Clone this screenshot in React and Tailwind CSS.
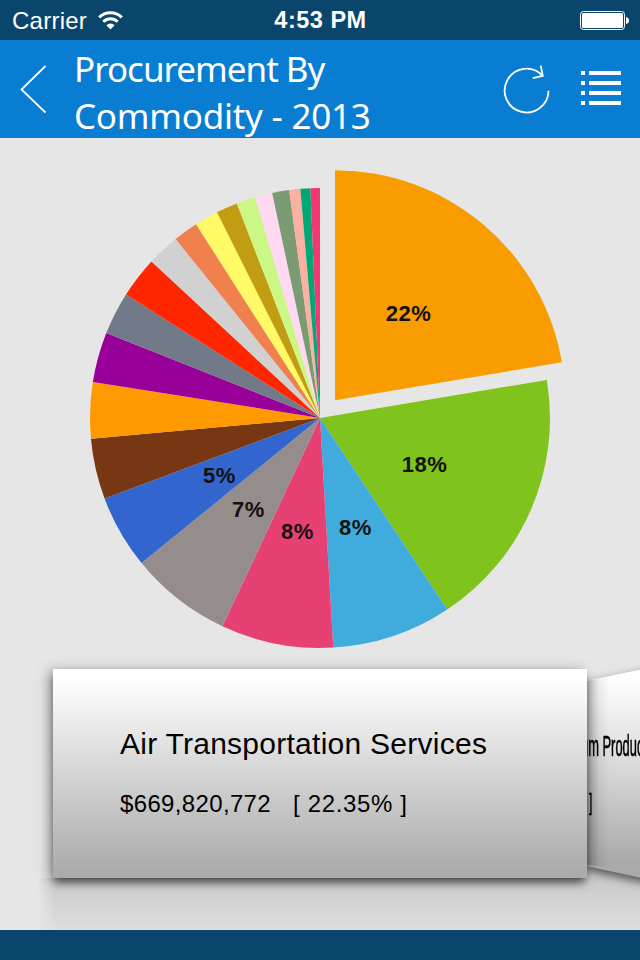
import React from "react";

const slices = [
  { end: 80.46, color: "#f89c00", label: "22%", x: 408.5, y: 320.5, out: true },
  { end: 146.4, color: "#80c31c", label: "18%", x: 424.5, y: 471.5 },
  { end: 176.7, color: "#40acdd", label: "8%", x: 355.5, y: 535 },
  { end: 205.1, color: "#e74173", label: "8%", x: 297.5, y: 539 },
  { end: 230.9, color: "#958d8b", label: "7%", x: 248.5, y: 516.5 },
  { end: 249.5, color: "#3265cd", label: "5%", x: 219.5, y: 483 },
  { end: 264.8, color: "#783713" },
  { end: 279, color: "#ff9900" },
  { end: 291.7, color: "#990099" },
  { end: 302.5, color: "#727989" },
  { end: 312.9, color: "#ff2600" },
  { end: 321.1, color: "#d1d1d1" },
  { end: 327.4, color: "#f0814f" },
  { end: 333.4, color: "#fffa66" },
  { end: 338.8, color: "#c39d11" },
  { end: 343.6, color: "#cbf785" },
  { end: 348, color: "#ffd8f1" },
  { end: 352.3, color: "#7b9c72" },
  { end: 355.1, color: "#fbb0a3" },
  { end: 357.6, color: "#00a875" },
  { end: 360, color: "#f43672" },
];

const slicePath = (start, end, out) => {
  const cx = out ? 335 : 320;
  const cy = out ? 400.3 : 418;
  const r = 230;
  const point = (deg) => {
    const a = (deg * Math.PI) / 180;
    return `${cx + r * Math.sin(a)} ${cy - r * Math.cos(a)}`;
  };
  return `M${cx} ${cy} L${point(start)} A${r} ${r} 0 0 1 ${point(end)} Z`;
};

const StatusBar = () => {
  return (
    <div className="grid grid-cols-3 items-center h-10 pl-3 pr-[11px] bg-[#0a456b] text-white text-[24px]">
      <div className="flex items-center gap-[11px] pt-px">
        <span className="tracking-[0.25px]">Carrier</span>
        <svg className="w-[25px] h-[19px]" viewBox="0 0 25 19" fill="none">
          <path d="M1.2 6.4A16 16 0 0 1 23.8 6.4" stroke="white" strokeWidth="3.2" />
          <path d="M5.3 10.8A10.2 10.2 0 0 1 19.7 10.8" stroke="white" strokeWidth="3" />
          <path d="M12.5 18.5L8.4 14.2A6 6 0 0 1 16.6 14.2Z" fill="white" />
        </svg>
      </div>
      <div className="text-center font-bold text-[23.5px] tracking-[0.5px] whitespace-nowrap pt-px">4:53 PM</div>
      <div className="flex justify-end">
        <svg className="w-[49px] h-5" viewBox="0 0 49 20">
          <rect x="0.5" y="1.5" width="44" height="18" rx="3" fill="none" stroke="white" />
          <rect x="2" y="3" width="41" height="15" rx="1.5" fill="white" />
          <path d="M46 7C48 7.5 49 8.5 49 10.5S48 13.5 46 14Z" fill="white" />
        </svg>
      </div>
    </div>
  );
};

const Header = () => {
  return (
    <div className="flex h-[98px] bg-[#087dd2] text-white">
      <svg className="w-[26px] h-[50px] ml-5 mt-[25px]" viewBox="0 0 26 50" fill="none">
        <path d="M25.5 1L1.5 24.5L25.5 47.5" stroke="white" strokeWidth="1.8" />
      </svg>
      <h1 className="ml-7 mt-[5px] w-[400px] h-[93px] font-['Noto_Sans','Open_Sans',sans-serif] font-normal text-[35px] leading-[47px]">
        <span className="tracking-[-1px]">Procurement By</span>
        <br />
        <span className="tracking-[-0.25px]">Commodity - 2013</span>
      </h1>
      <svg className="w-[48px] h-[50px] mt-[25px] ml-[29px]" viewBox="503 65 48 50" fill="none" stroke="white" strokeWidth="1.8">
        <path d="M548.5 90.8A21.9 21.9 0 1 1 542 75" />
        <path d="M540.7 65.6L542.8 75.9L532.7 78.2" />
      </svg>
      <svg className="w-10 h-[34px] mt-[31px] ml-[30px]" viewBox="0 0 40 34" fill="white">
        {[0, 10, 20, 30].map((y) => (
          <g key={y}>
            <rect x="0" y={y} width="4" height="4" />
            <rect x="8" y={y} width="32" height="4" />
          </g>
        ))}
      </svg>
    </div>
  );
};

const Pie = () => {
  return (
    <svg className="block w-full h-[531px]" viewBox="0 138 640 531">
      {slices.map((s, i) => (
        <path key={s.end} d={slicePath(i ? slices[i - 1].end : 0, s.end, s.out)} fill={s.color} />
      ))}
      {slices
        .filter((s) => s.label)
        .map((s) => (
          <text
            key={s.end}
            x={s.x}
            y={s.y}
            textAnchor="middle"
            className="font-bold text-[22px] tracking-[0.5px] fill-[#15110f]"
          >
            {s.label}
          </text>
        ))}
    </svg>
  );
};

const Cards = () => {
  return (
    <div className="relative h-[261px]">
      {/* reflections on the floor */}
      <div className="absolute left-[38px] top-[209px] w-[560px] h-[52px] bg-linear-to-b from-[#cacaca] to-[#dedede] mask-l-from-[97%]"></div>
      <div className="absolute left-[586px] top-[190px] w-[54px] h-[71px] bg-linear-to-b from-[#cacaca] from-27% to-[#dedede]"></div>
      {/* next card, turned away */}
      <div className="absolute left-[586px] -top-5 w-[54px] h-[281px] overflow-hidden">
        <div className="absolute inset-0 drop-shadow-[0_4px_5px_rgba(0,0,0,0.6)]">
          <div className="w-[80px] h-[240px] bg-linear-to-b from-white from-12% via-[#d6d6d6] via-52% to-[#aaa] to-88% [clip-path:polygon(0_32px,80px_15px,80px_234px,0_217px)]"></div>
        </div>
        <div className="absolute left-[-5px] top-[80px] origin-left scale-x-[0.43] text-[30px] leading-[34px] whitespace-nowrap text-black [-webkit-text-stroke:0.7px_black]">
          um Produc
        </div>
        <div className="absolute left-[-11px] top-[139px] origin-left scale-x-[0.5] text-[24px] leading-7 whitespace-nowrap text-black [-webkit-text-stroke:0.5px_black]">
          % ]
        </div>
        <div className="absolute left-0 top-[28px] w-[24px] h-[190px] bg-linear-to-r from-black/28 via-black/6 via-55% to-black/0 [clip-path:polygon(0_4px,100%_0,100%_100%,0_188px)]"></div>
      </div>
      <div className="absolute left-[53px] top-0 w-[534px] h-[209px] pl-[67px] pt-[57px] bg-linear-to-b from-white from-5% via-[#d6d6d6] via-48% to-[#ababab] to-97% shadow-[0_6px_8px_-2px_rgba(0,0,0,0.55),-4px_2px_12px_rgba(0,0,0,0.35)] text-black">
        <h2 className="text-[30px] leading-9 tracking-[0.26px] whitespace-nowrap">Air Transportation Services</h2>
        <div className="flex gap-[22px] mt-7 text-[24px] leading-7 whitespace-nowrap">
          <span className="tracking-[0.35px]">$669,820,772</span>
          <span className="tracking-[0.65px]">[ 22.35% ]</span>
        </div>
      </div>
    </div>
  );
};

const App = () => {
  return (
    <div className="w-[640px] h-[960px] flex flex-col overflow-hidden bg-[#e6e6e6] font-['Liberation_Sans',Arial,sans-serif]">
      <StatusBar />
      <Header />
      <Pie />
      <Cards />
      <div className="relative h-[30px] bg-[#0a456b]"></div>
    </div>
  );
};

export default App;
